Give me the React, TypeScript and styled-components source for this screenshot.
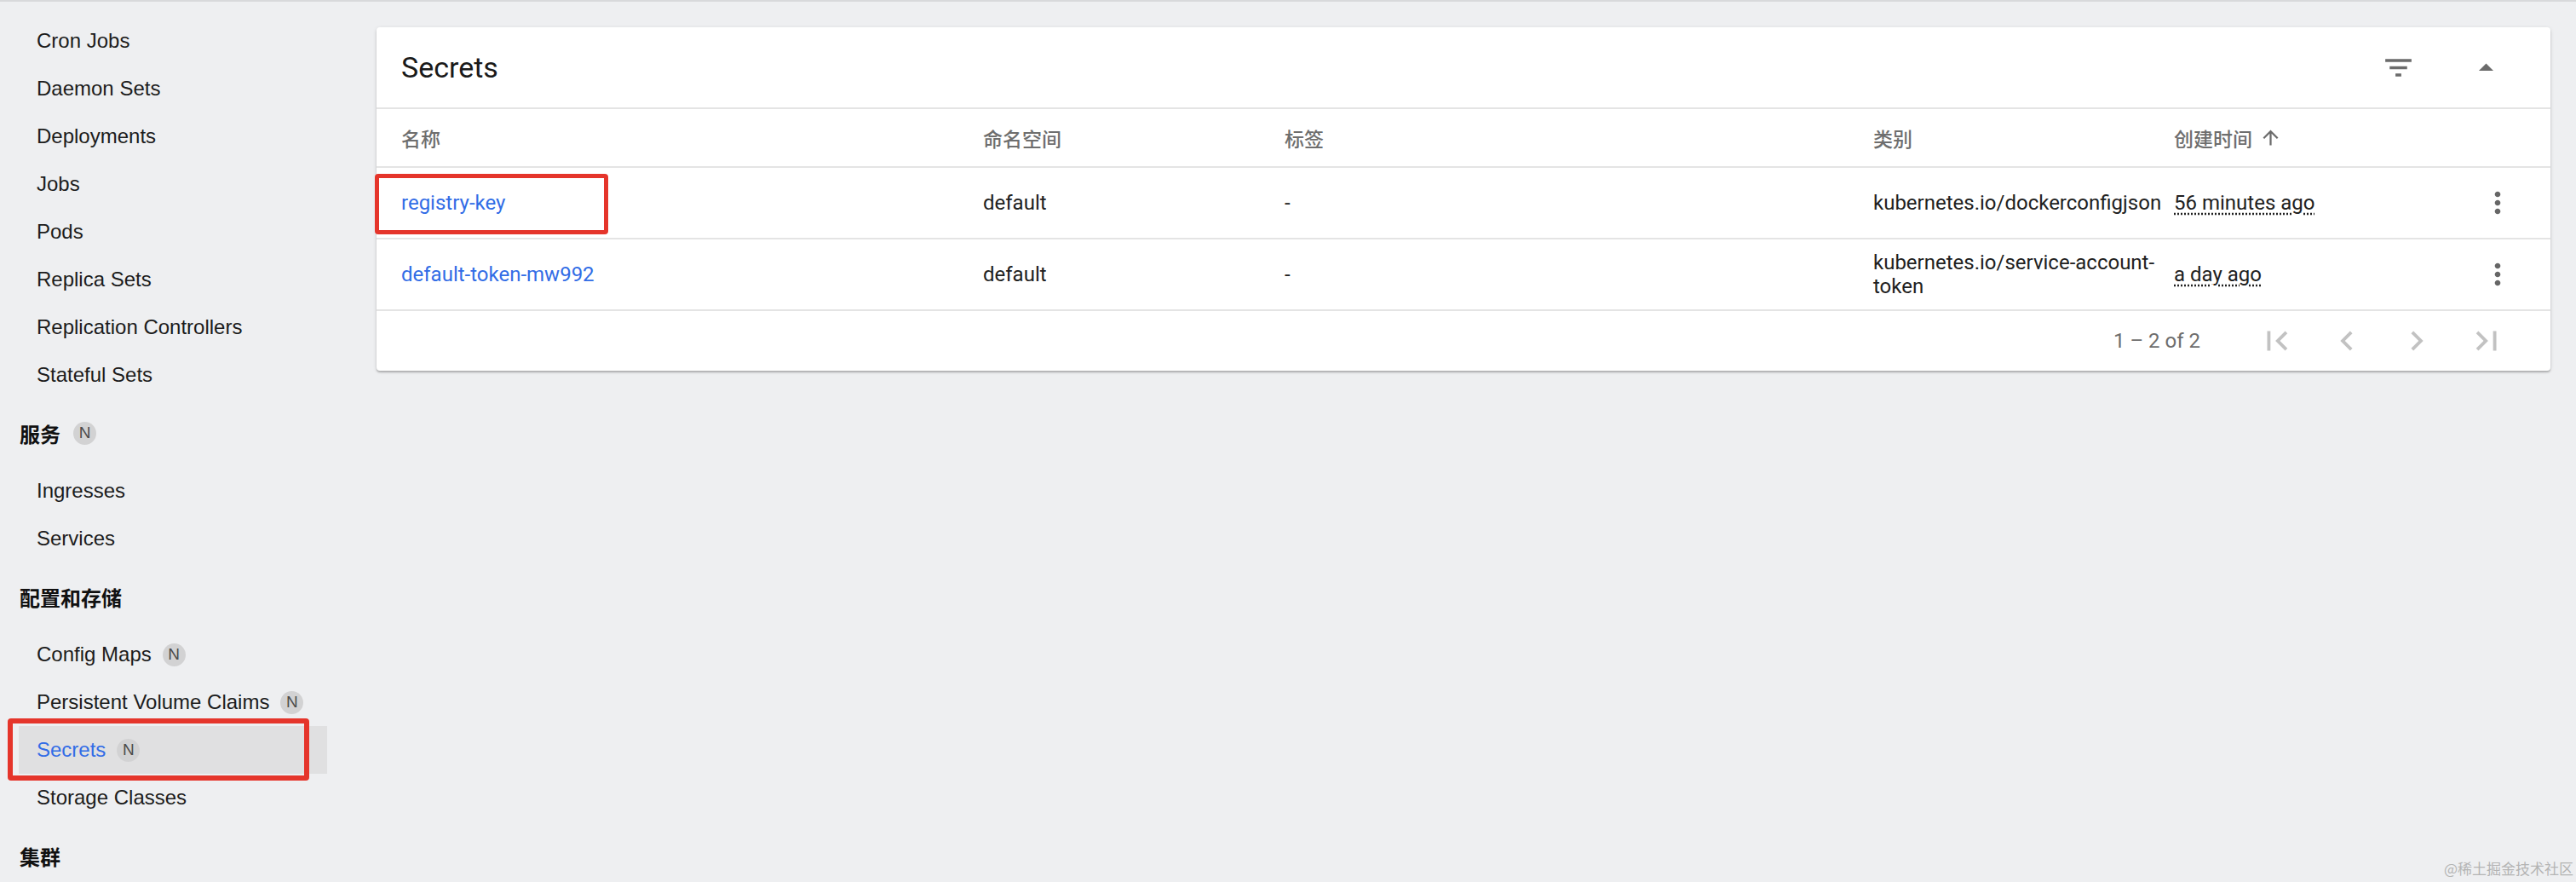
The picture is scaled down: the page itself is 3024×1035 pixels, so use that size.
import styled, { createGlobalStyle } from 'styled-components';

type NavEntry =
  | { kind: 'section'; label: string; badge?: boolean }
  | { kind: 'item'; label: string; badge?: boolean; active?: boolean };

const NAV: NavEntry[] = [
  { kind: 'item', label: 'Cron Jobs' },
  { kind: 'item', label: 'Daemon Sets' },
  { kind: 'item', label: 'Deployments' },
  { kind: 'item', label: 'Jobs' },
  { kind: 'item', label: 'Pods' },
  { kind: 'item', label: 'Replica Sets' },
  { kind: 'item', label: 'Replication Controllers' },
  { kind: 'item', label: 'Stateful Sets' },
  { kind: 'section', label: '服务', badge: true },
  { kind: 'item', label: 'Ingresses' },
  { kind: 'item', label: 'Services' },
  { kind: 'section', label: '配置和存储' },
  { kind: 'item', label: 'Config Maps', badge: true },
  { kind: 'item', label: 'Persistent Volume Claims', badge: true },
  { kind: 'item', label: 'Secrets', badge: true, active: true },
  { kind: 'item', label: 'Storage Classes' },
  { kind: 'section', label: '集群' },
];

type SecretRow = {
  name: string;
  namespace: string;
  labels: string;
  type: string;
  created: string;
  marked?: boolean;
};

const ROWS: SecretRow[] = [
  {
    name: 'registry-key',
    namespace: 'default',
    labels: '-',
    type: 'kubernetes.io/dockerconfigjson',
    created: '56 minutes ago',
    marked: true,
  },
  {
    name: 'default-token-mw992',
    namespace: 'default',
    labels: '-',
    type: 'kubernetes.io/service-account-token',
    created: 'a day ago',
  },
];

const Icon = ({ d, size, color }: { d: string; size: number; color: string }) => (
  <svg width={size} height={size} viewBox="0 0 24 24" fill={color}>
    <path d={d} />
  </svg>
);

const PATHS = {
  filter: 'M10 18h4v-2h-4v2zM3 6v2h18V6H3zm3 7h12v-2H6v2z',
  dropUp: 'M7 14l5-5 5 5z',
  moreVert:
    'M12 8c1.1 0 2-.9 2-2s-.9-2-2-2-2 .9-2 2 .9 2 2 2zm0 2c-1.1 0-2 .9-2 2s.9 2 2 2 2-.9 2-2-.9-2-2-2zm0 6c-1.1 0-2 .9-2 2s.9 2 2 2 2-.9 2-2-.9-2-2-2z',
  arrowUp: 'M4 12l1.41 1.41L11 7.83V20h2V7.83l5.58 5.59L20 12l-8-8-8 8z',
  firstPage: 'M18.41 16.59L13.82 12l4.59-4.59L17 6l-6 6 6 6zM6 6h2v12H6z',
  prev: 'M15.41 7.41L14 6l-6 6 6 6 1.41-1.41L10.83 12z',
  next: 'M10 6L8.59 7.41 13.17 12l-4.58 4.59L10 18l6-6z',
  lastPage: 'M5.59 7.41L10.18 12l-4.59 4.59L7 18l6-6-6-6zM16 6h2v12h-2z',
};

const App = () => {
  return (
    <>
      <GlobalStyle />
      <StyledPage>
        <StyledSidebar>
          {NAV.map((entry) =>
            entry.kind === 'section' ? (
              <StyledSection key={entry.label}>
                {entry.label}
                {entry.badge && <StyledBadge $gap={15}>N</StyledBadge>}
              </StyledSection>
            ) : (
              <StyledNavItem key={entry.label} $active={!!entry.active}>
                {entry.label}
                {entry.badge && <StyledBadge $gap={13}>N</StyledBadge>}
                {entry.active && <StyledNavMark />}
              </StyledNavItem>
            ),
          )}
        </StyledSidebar>

        <StyledMain>
          <StyledCard>
            <StyledCardHeader>
              <StyledTitle>Secrets</StyledTitle>
              <StyledHeaderActions>
                <StyledIconBtn>
                  <Icon d={PATHS.filter} size={41} color="#6b6b6b" />
                </StyledIconBtn>
                <StyledIconBtn>
                  <Icon d={PATHS.dropUp} size={41} color="#6b6b6b" />
                </StyledIconBtn>
              </StyledHeaderActions>
            </StyledCardHeader>

            <StyledHeadRow>
              <StyledHeadCell $first>名称</StyledHeadCell>
              <StyledHeadCell>命名空间</StyledHeadCell>
              <StyledHeadCell>标签</StyledHeadCell>
              <StyledHeadCell>类别</StyledHeadCell>
              <StyledHeadCell>
                创建时间
                <StyledSortIcon>
                  <Icon d={PATHS.arrowUp} size={27} color="#6b6b6b" />
                </StyledSortIcon>
              </StyledHeadCell>
              <StyledHeadCell />
            </StyledHeadRow>

            {ROWS.map((row) => (
              <StyledRow key={row.name}>
                <StyledCell $first>
                  <StyledLink>{row.name}</StyledLink>
                  {row.marked && <StyledCellMark />}
                </StyledCell>
                <StyledCell>{row.namespace}</StyledCell>
                <StyledCell>{row.labels}</StyledCell>
                <StyledCell $wrap>{row.type}</StyledCell>
                <StyledCell>
                  <StyledAge>{row.created}</StyledAge>
                </StyledCell>
                <StyledCell>
                  <StyledKebab>
                    <Icon d={PATHS.moreVert} size={40} color="#666666" />
                  </StyledKebab>
                </StyledCell>
              </StyledRow>
            ))}

            <StyledFooter>
              <StyledRange>1 – 2 of 2</StyledRange>
              <StyledPager>
                <StyledPageBtn>
                  <Icon d={PATHS.firstPage} size={46} color="#c2c2c2" />
                </StyledPageBtn>
                <StyledPageBtn>
                  <Icon d={PATHS.prev} size={46} color="#c2c2c2" />
                </StyledPageBtn>
                <StyledPageBtn>
                  <Icon d={PATHS.next} size={46} color="#c2c2c2" />
                </StyledPageBtn>
                <StyledPageBtn>
                  <Icon d={PATHS.lastPage} size={46} color="#c2c2c2" />
                </StyledPageBtn>
              </StyledPager>
            </StyledFooter>
          </StyledCard>
        </StyledMain>

        <StyledWatermark>@稀土掘金技术社区</StyledWatermark>
      </StyledPage>
    </>
  );
};

const GlobalStyle = createGlobalStyle`
  html, body {
    margin: 0;
    padding: 0;
    background: #eeeff1;
  }
  * {
    box-sizing: border-box;
  }
`;

const StyledPage = styled.div`
  position: relative;
  display: flex;
  height: 1035px;
  overflow: hidden;
  background: #eeeff1;
  border-top: 2px solid #d8d9db;
`;

const StyledSidebar = styled.nav`
  flex: 0 0 412px;
  padding-top: 18px;
  font-family: 'Liberation Sans', 'Noto Sans CJK SC', sans-serif;
  font-size: 24px;
  color: #1c1c1c;
`;

const StyledSection = styled.div`
  display: flex;
  align-items: center;
  height: 56px;
  margin: 12px 0;
  padding-left: 23px;
  font-weight: 700;
  color: #111;
`;

const StyledNavItem = styled.div<{ $active: boolean }>`
  position: relative;
  display: flex;
  align-items: center;
  width: 362px;
  height: 56px;
  margin-left: 22px;
  padding-left: 21px;
  background: ${({ $active }) => ($active ? '#e0e0e1' : 'transparent')};
  color: ${({ $active }) => ($active ? '#326de6' : '#1c1c1c')};
`;

const StyledNavMark = styled.span`
  position: absolute;
  left: -13px;
  top: -9px;
  width: 354px;
  height: 73px;
  border: 6px solid #e5352b;
  border-radius: 4px;
`;

const StyledBadge = styled.span<{ $gap: number }>`
  display: inline-flex;
  align-items: center;
  justify-content: center;
  width: 27px;
  height: 27px;
  margin-left: ${({ $gap }) => $gap}px;
  border-radius: 50%;
  background: #d2d2d3;
  color: #4b4b4b;
  font-family: 'Liberation Sans', sans-serif;
  font-size: 19px;
  font-weight: 400;
`;

const StyledMain = styled.main`
  flex: 1;
  padding: 30px 30px 0 30px;
`;

const StyledCard = styled.section`
  background: #fff;
  border-radius: 4px;
  box-shadow: 0 2px 2px rgba(0, 0, 0, 0.22), 0 1px 5px rgba(0, 0, 0, 0.1);
  font-family: Roboto, 'Noto Sans CJK SC', sans-serif;
  font-size: 24px;
  color: #212121;
`;

const StyledCardHeader = styled.header`
  display: flex;
  align-items: center;
  justify-content: space-between;
  height: 96px;
  padding: 0 46px 0 29px;
  border-bottom: 2px solid #e4e4e4;
`;

const StyledTitle = styled.h1`
  margin: 0;
  font-size: 34px;
  font-weight: 400;
  color: #1a1a1a;
`;

const StyledHeaderActions = styled.div`
  display: flex;
  align-items: center;
  gap: 43px;
`;

const StyledIconBtn = styled.button`
  display: flex;
  align-items: center;
  justify-content: center;
  width: 60px;
  height: 60px;
  padding: 0;
  border: none;
  background: none;
`;

const COLUMNS = '712px 354px 691px 353px 356px 86px';

const StyledHeadRow = styled.div`
  display: grid;
  grid-template-columns: ${COLUMNS};
  height: 69px;
  border-bottom: 2px solid #e4e4e4;
`;

const StyledHeadCell = styled.div<{ $first?: boolean }>`
  display: flex;
  align-items: center;
  padding-left: ${({ $first }) => ($first ? '29px' : '0')};
  font-family: 'Noto Sans CJK SC', Roboto, sans-serif;
  font-size: 23px;
  font-weight: 500;
  color: #6e6e6e;
`;

const StyledSortIcon = styled.span`
  display: flex;
  margin-left: 8px;
`;

const StyledRow = styled.div`
  display: grid;
  grid-template-columns: ${COLUMNS};
  height: 84px;
  border-bottom: 2px solid #e4e4e4;
`;

const StyledCell = styled.div<{ $first?: boolean; $wrap?: boolean }>`
  position: relative;
  display: flex;
  align-items: center;
  padding-left: ${({ $first }) => ($first ? '29px' : '0')};
  padding-right: ${({ $wrap }) => ($wrap ? '12px' : '0')};
  line-height: 28px;
  white-space: ${({ $wrap }) => ($wrap ? 'normal' : 'nowrap')};
`;

const StyledCellMark = styled.span`
  position: absolute;
  left: -2px;
  top: 7px;
  width: 274px;
  height: 71px;
  border: 5px solid #e5352b;
  border-radius: 4px;
`;

const StyledLink = styled.a`
  color: #326de6;
  text-decoration: none;
`;

const StyledAge = styled.span`
  text-decoration: underline dotted;
  text-underline-offset: 4px;
`;

const StyledKebab = styled.span`
  display: flex;
  margin-left: 4px;
`;

const StyledFooter = styled.footer`
  display: flex;
  align-items: center;
  justify-content: flex-end;
  height: 70px;
  padding-right: 34px;
`;

const StyledRange = styled.span`
  margin-right: 49px;
  color: #6e6e6e;
`;

const StyledPager = styled.div`
  display: flex;
`;

const StyledPageBtn = styled.button`
  display: flex;
  align-items: center;
  justify-content: center;
  width: 82px;
  height: 60px;
  padding: 0;
  border: none;
  background: none;
`;

const StyledWatermark = styled.div`
  position: absolute;
  right: 3px;
  bottom: 4px;
  font-family: 'Noto Sans CJK SC', sans-serif;
  font-size: 17px;
  color: #b4b4b4;
`;

export default App;
